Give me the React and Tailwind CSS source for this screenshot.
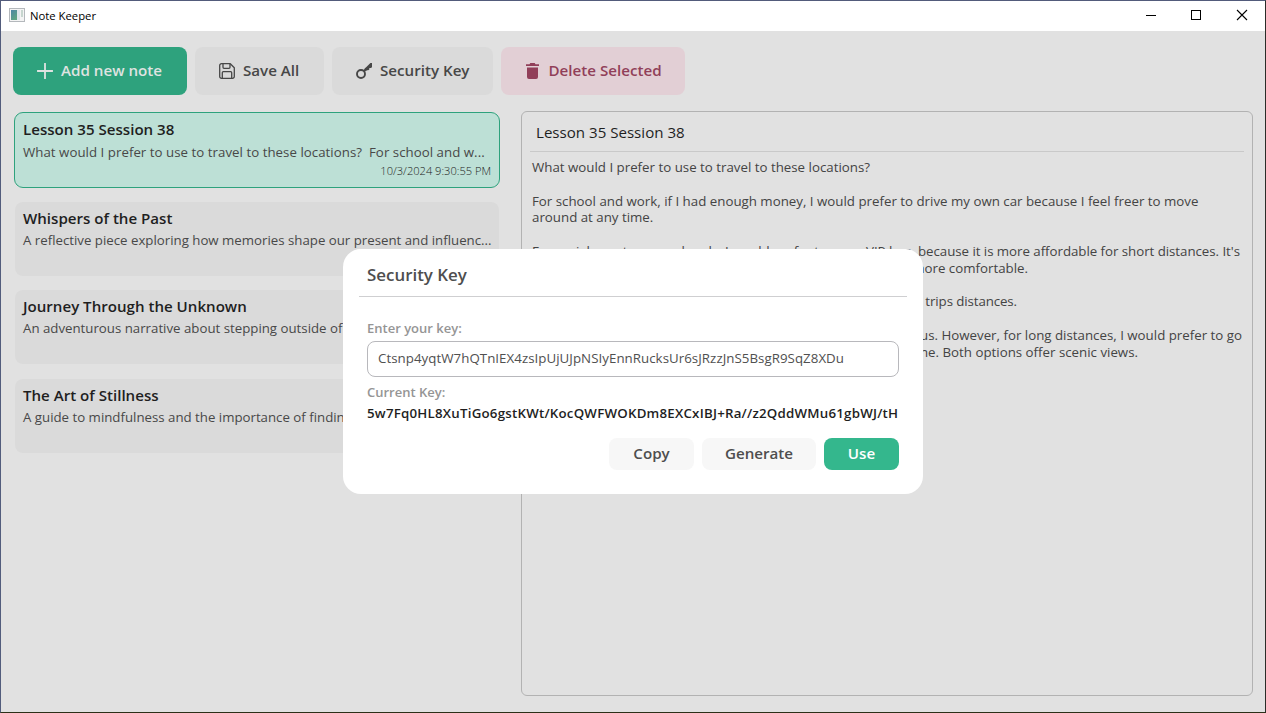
const notes = [
  { title: "Lesson 35 Session 38", text: "What would I prefer to use to travel to these locations?\u00a0 For school and w...", date: "10/3/2024 9:30:55 PM", active: true },
  { title: "Whispers of the Past", text: "A reflective piece exploring how memories shape our present and influenc..." },
  { title: "Journey Through the Unknown", text: "An adventurous narrative about stepping outside of" },
  { title: "The Art of Stillness", text: "A guide to mindfulness and the importance of findin" },
];

function TitleBar() {
  return (
    <header className="flex h-[30px] shrink-0 items-center bg-white pl-2">
      <svg width="16" height="14" viewBox="0 0 16 14" shapeRendering="crispEdges" className="-mt-0.5">
        <defs>
          <linearGradient id="pane" x1="0" y1="0" x2="0.6" y2="1">
            <stop offset="0" stopColor="#4d86a6" />
            <stop offset="1" stopColor="#5fa583" />
          </linearGradient>
        </defs>
        <rect x="0.5" y="0.5" width="15" height="13" fill="#f4f4f4" stroke="#b4b8bc" />
        <rect x="2" y="2" width="6" height="10" fill="url(#pane)" />
        <rect x="8" y="2" width="3" height="10" fill="#dfe6ea" />
        <rect x="12" y="2" width="2" height="7" fill="#c7d6cf" />
      </svg>
      <span className="ml-[5px] text-[11.3px] leading-4 text-black">Note Keeper</span>
      <div className="ml-auto flex h-full pr-px text-black">
        <svg width="46" height="30" shapeRendering="crispEdges"><path d="M19 14.500h10" stroke="currentColor" /></svg>
        <svg width="45" height="30" shapeRendering="crispEdges"><path d="M18.500 9.500h9v9h-9z" fill="none" stroke="currentColor" /></svg>
        <svg width="46" height="30"><path d="M19 9l10 10M29 9l-10 10" stroke="currentColor" strokeWidth="1.1" /></svg>
      </div>
    </header>
  );
}

function NoteCard({ note }) {
  const tone = note.active ? "border-[#2ea27d] bg-[#bde0d6]" : "border-transparent bg-[#dadada] bg-clip-padding";
  return (
    <article className={`flex h-[76px] flex-col overflow-hidden whitespace-nowrap rounded-[9px] border px-2 pt-[5px] ${tone}`}>
      <h2 className="text-[15.1px] font-semibold leading-[22px] text-[#1f1f1f]">{note.title}</h2>
      <p className={`text-[13.25px] leading-[22px] text-[#484848] ${note.active ? "mt-px tracking-[0.04px]" : "mt-[0.4px]"}`}>{note.text}</p>
      {note.date && <time className="self-end text-[11.1px] font-light leading-4 text-[#222]">{note.date}</time>}
    </article>
  );
}

function Gap() {
  return <div className="h-[16.8px]" />;
}

function Button({ className, icon, children }) {
  return (
    <button className={`flex items-center rounded-lg text-[15.15px] font-semibold ${className}`}>
      {icon}
      <span className="pb-0.5">{children}</span>
    </button>
  );
}

const plusIcon = (
  <svg width="16" height="16" viewBox="0 0 16 16" className="mr-2"><path d="M8 0.500v15M0.500 8h15" stroke="currentColor" strokeWidth="1.8" strokeLinecap="round" /></svg>
);

const saveIcon = (
  <svg width="16" height="16" viewBox="0 0 16 16" fill="none" stroke="currentColor" strokeWidth="1.3" strokeLinejoin="round" className="mr-2">
    <path d="M2.500 .7H11.300L15.300 4.700V13.500a1.800 1.800 0 0 1-1.800 1.800H2.500A1.800 1.800 0 0 1 .7 13.500V2.500A1.800 1.800 0 0 1 2.500 .7z" />
    <path d="M4 .9v3.400a1 1 0 0 0 1 1h5a1 1 0 0 0 1-1V.9M3.300 15.200V9.700a1 1 0 0 1 1-1h7.400a1 1 0 0 1 1 1v5.500" />
  </svg>
);

const keyIcon = (
  <svg width="16" height="16" viewBox="0 0 16 16" fill="none" stroke="currentColor" className="mr-2">
    <circle cx="5" cy="11" r="4" strokeWidth="1.9" />
    <path d="M7.800 8.200L10.500 5.500" strokeWidth="2.2" />
    <path d="M8.600 5.800L14.400 0H16V4.200L14.800 5H13.300V6.400L12.200 7.300H10.800L9.800 8.200z" fill="currentColor" stroke="none" />
  </svg>
);

const trashIcon = (
  <svg width="15" height="16" viewBox="0 0 15 16" fill="currentColor" className="mr-[8.500px]">
    <path d="M1 1.200H4.500L5.300 0H9.700L10.500 1.200H14V3H1zM2 4.500H13V14a2 2 0 0 1-2 2H4a2 2 0 0 1-2-2z" />
  </svg>
);

export default function App() {
  return (
    <div className="relative flex h-[713px] w-[1266px] flex-col overflow-hidden border border-b-[#2c3018] border-l-[#525c7c] border-r-[#2b2d28] border-t-[#525b7b] bg-[#e1e1e1] font-['Open_Sans','Noto_Sans',sans-serif]">
      <TitleBar />
      <nav className="mt-4 flex h-12 shrink-0 gap-2 pl-3">
        <Button icon={plusIcon} className="w-[174px] bg-[#2ea27d] pl-6 text-[#dfe3e1]">Add new note</Button>
        <Button icon={saveIcon} className="w-[129px] bg-[#dadada] pl-6 text-[#474747]">Save All</Button>
        <Button icon={keyIcon} className="w-[161px] bg-[#dadada] pl-6 text-[#474747]">Security Key</Button>
        <Button icon={trashIcon} className="w-[184px] bg-[#e2cfd5] pl-6 text-[#913f59]">Delete Selected</Button>
      </nav>
      <main className="flex min-h-0 flex-1 pb-4 pl-[13px] pr-3 pt-4">
        <section className="mr-[21px] flex w-[486px] shrink-0 flex-col gap-[12.5px] pt-px">
          {notes.map((n) => <NoteCard key={n.title} note={n} />)}
        </section>
        <section className="flex-1 rounded-md border border-[#b2b2b2] px-2">
          <h1 className="h-10 border-b border-[#c9c9c9] pl-[6px] pt-[9px] text-[15.1px] leading-[22px] text-[#1f1f1f]">Lesson 35 Session 38</h1>
          <div className="whitespace-nowrap pl-[2px] pt-[7px] text-[13.3px] leading-[16.8px] text-[#444]">
            <p>What would I prefer to use to travel to these locations?</p>
            <Gap />
            <p>For school and work, if I had enough money, I would prefer to drive my own car because I feel freer to move</p>
            <p>around at any time.</p>
            <Gap />
            <div className="flex w-[708px] justify-between">
              <span className="tracking-[-0.07px]">For social events on weekends, I would prefer to use a VIP bus</span>
              <span className="tracking-[-0.04px]">because it is more affordable for short distances. It's</span>
            </div>
            <p className="w-[496px] text-right">more comfortable.</p>
            <Gap />
            <p className="w-[485px] text-right tracking-[-0.1px]">trips distances.</p>
            <Gap />
            <p className="w-[710px] text-right">bus. However, for long distances, I would prefer to go</p>
            <p className="w-[606px] text-right">plane. Both options offer scenic views.</p>
          </div>
        </section>
      </main>

      <div role="dialog" className="absolute left-[342px] top-[248px] flex h-[245px] w-[580px] flex-col rounded-[18px] bg-white px-4 pt-3">
        <h2 className="h-9 shrink-0 border-b border-[#cfcfd1] pl-2 text-[16.9px] font-semibold leading-7 text-[#4e4e4e]">Security Key</h2>
        <div className="flex flex-col px-2 pt-[21px]">
          <label className="text-[13px] font-semibold leading-5 text-[#959595]">Enter your key:</label>
          <div className="mt-[3px] flex h-9 items-center rounded-lg border border-[#b8b8bc] bg-white pb-px pl-[10px] text-[13.3px] tracking-[0.04px] text-[#505050]">Ctsnp4yqtW7hQTnIEX4zsIpUjUJpNSIyEnnRucksUr6sJRzzJnS5BsgR9SqZ8XDu</div>
          <label className="mt-[5px] text-[13px] font-semibold leading-5 text-[#959595]">Current Key:</label>
          <p className="whitespace-nowrap text-[13.3px] font-semibold leading-[22px] tracking-[0.22px] text-[#1f1f1f]">5w7Fq0HL8XuTiGo6gstKWt/KocQWFWOKDm8EXCxIBJ+Ra//z2QddWMu61gbWJ/tH</p>
          <div className="mt-[14px] flex h-8 justify-end gap-2">
            <Button className="w-[85px] justify-center bg-[#f7f7f7] text-[#4e4e4e]">Copy</Button>
            <Button className="w-[114px] justify-center bg-[#f7f7f7] text-[#4e4e4e]">Generate</Button>
            <Button className="w-[75px] justify-center bg-[#34b78d] text-white">Use</Button>
          </div>
        </div>
      </div>
    </div>
  );
}
